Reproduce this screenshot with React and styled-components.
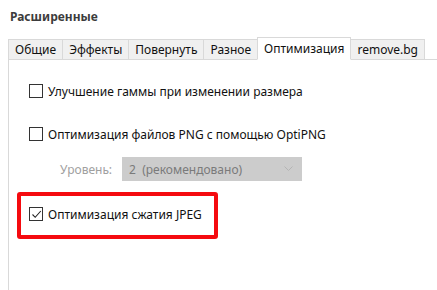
import styled, { createGlobalStyle } from "styled-components";

const GlobalStyle = createGlobalStyle`
  html, body {
    margin: 0;
    padding: 0;
    background: #ffffff;
  }
  body {
    font-family: "Noto Sans", "Open Sans", sans-serif;
    font-size: 12px;
    color: #1a1a1a;
  }
`;

const tabs = ["Общие", "Эффекты", "Повернуть", "Разное", "Оптимизация", "remove.bg"];
const activeTab = "Оптимизация";

export default function App() {
  return (
    <>
      <GlobalStyle />
      <Page>
        <Title>Расширенные</Title>
        <TabBar>
          {tabs.map((tab) => (
            <Tab key={tab} $active={tab === activeTab}>
              {tab}
            </Tab>
          ))}
          <TabFill />
        </TabBar>
        <Panel>
          <Option>
            <CheckBox />
            <Label>Улучшение гаммы при изменении размера</Label>
          </Option>
          <Option $gap={27}>
            <CheckBox />
            <Label>Оптимизация файлов PNG с помощью OptiPNG</Label>
          </Option>
          <LevelRow>
            <LevelLabel>Уровень:</LevelLabel>
            <Select>
              <span>2&nbsp;&nbsp;(рекомендовано)</span>
              <svg width="9" height="6" viewBox="0 0 9 6">
                <path d="M0.5 0.5 L4.5 4.5 L8.5 0.5" fill="none" stroke="#b4b4b4" strokeWidth="1" />
              </svg>
            </Select>
          </LevelRow>
          <Highlight>
            <Option $gap={0}>
              <CheckBox $checked>
                <svg width="11" height="11" viewBox="0 0 11 11">
                  <path d="M1.5 5.5 L4.2 8.3 L9.8 2" fill="none" stroke="#222" strokeWidth="1.1" />
                </svg>
              </CheckBox>
              <Label>Оптимизация сжатия JPEG</Label>
            </Option>
          </Highlight>
        </Panel>
      </Page>
    </>
  );
}

const Page = styled.div`
  display: flex;
  flex-direction: column;
  height: 290px;
  padding-left: 8px;
  box-sizing: border-box;
  overflow: hidden;
`;

const Title = styled.div`
  font-size: 12px;
  font-weight: 700;
  color: #3c3c3c;
  padding: 8px 0 0 2px;
  height: 29px;
  box-sizing: border-box;
  height: 38px;
`;

const TabBar = styled.div`
  display: flex;
  align-items: flex-end;
  height: 23px;
  margin-top: -2px;
`;

const Tab = styled.div`
  box-sizing: border-box;
  height: ${(p) => (p.$active ? "23px" : "21px")};
  padding: 0 6px;
  display: flex;
  align-items: center;
  background: ${(p) => (p.$active ? "#ffffff" : "#f0f0f0")};
  border: 1px solid #d9d9d9;
  border-bottom: ${(p) => (p.$active ? "1px solid #ffffff" : "1px solid #d9d9d9")};
  margin-right: -1px;
  margin-bottom: -1px;
  position: relative;
  z-index: ${(p) => (p.$active ? 1 : 0)};
  color: #111;
  white-space: nowrap;
`;

const TabFill = styled.div`
  flex: 1;
`;

const Panel = styled.div`
  flex: 1;
  border-left: 1px solid #d9d9d9;
  border-top: 1px solid #d9d9d9;
  padding: 23px 0 0 20px;
  display: flex;
  flex-direction: column;
  align-items: flex-start;
`;

const Option = styled.div`
  display: flex;
  align-items: center;
  gap: 5px;
  margin-top: ${(p) => (p.$gap ?? 0)}px;
  height: 16px;
`;

const CheckBox = styled.div`
  box-sizing: border-box;
  width: 14px;
  height: 14px;
  border: 1px solid #333;
  background: #fff;
  display: flex;
  align-items: center;
  justify-content: center;
`;

const Label = styled.span`
  color: #111;
  white-space: nowrap;
`;

const LevelRow = styled.div`
  display: flex;
  align-items: center;
  gap: 10px;
  margin: 15px 0 0 31px;
`;

const LevelLabel = styled.span`
  color: #a0a0a0;
`;

const Select = styled.div`
  box-sizing: border-box;
  width: 180px;
  height: 24px;
  background: #cccccc;
  display: flex;
  align-items: center;
  justify-content: space-between;
  padding: 0 9px 0 7px;
  color: #7a7a7a;
`;

const Highlight = styled.div`
  margin: 11px 0 0 -12px;
  box-sizing: border-box;
  width: 201px;
  height: 47px;
  border: 4px solid #f50a0f;
  border-radius: 3px;
  padding: 10px 0 0 8px;
`;
